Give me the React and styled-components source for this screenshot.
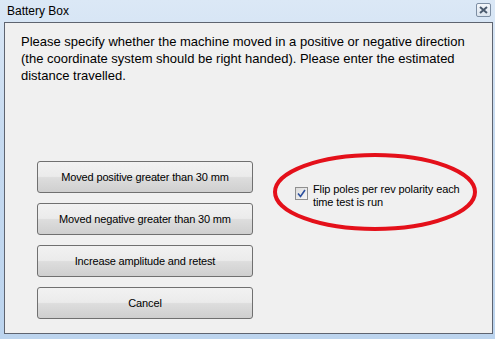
import React from "react";
import styled, { createGlobalStyle } from "styled-components";

const Global = createGlobalStyle`
  html, body {
    margin: 0;
    padding: 0;
    background: #c9dcf0;
  }
  * { box-sizing: border-box; }
`;

export default function App() {
    const buttons = [
        "Moved positive greater than 30 mm",
        "Moved negative greater than 30 mm",
        "Increase amplitude and retest",
        "Cancel",
    ];
    return (
        <>
            <Global />
            <Window>
                <TitleBar>
                    <Title>Battery Box</Title>
                    <CloseBox>
                        <svg width="9" height="8" viewBox="0 0 9 8">
                            <path d="M1 1 L8 7 M8 1 L1 7" stroke="#4a5a6e" strokeWidth="2" />
                        </svg>
                    </CloseBox>
                </TitleBar>
                <Panel>
                    <Message>
                        Please specify whether the machine moved in a positive or negative direction
                        (the coordinate system should be right handed). Please enter the estimated
                        distance travelled.
                    </Message>
                    <Controls>
                        <ButtonColumn>
                            {buttons.map((b) => (
                                <Button key={b}>{b}</Button>
                            ))}
                        </ButtonColumn>
                        <OptionArea>
                            <CheckRow>
                                <CheckBox>
                                    <svg width="9" height="9" viewBox="0 0 9 9">
                                        <path d="M1 4.5 L3.5 7.5 L8 1" fill="none" stroke="#2b4f9e" strokeWidth="1.6" />
                                    </svg>
                                </CheckBox>
                                <CheckLabel>Flip poles per rev polarity each time test is run</CheckLabel>
                            </CheckRow>
                            <Circle width="210" height="86" viewBox="0 0 210 86">
                                <ellipse cx="104" cy="42" rx="100" ry="37" fill="none" stroke="#e4101a" strokeWidth="4" />
                            </Circle>
                        </OptionArea>
                    </Controls>
                </Panel>
            </Window>
        </>
    );
}

const Window = styled.div`
    width: 495px;
    height: 339px;
    display: flex;
    flex-direction: column;
    background: linear-gradient(180deg, #dbe8f6 0%, #c6daf0 40%, #bcd4ee 100%);
    font-family: "Liberation Sans", Arial, sans-serif;
    color: #000;
`;

const TitleBar = styled.div`
    height: 21px;
    display: flex;
    align-items: center;
    justify-content: space-between;
    padding: 0 4px 0 7px;
`;

const Title = styled.span`
    font-size: 12px;
    color: #000;
    margin-top: 1px;
`;

const CloseBox = styled.div`
    width: 15px;
    height: 14px;
    margin-top: -1px;
    border: 1px solid #7d8ea3;
    border-radius: 2px;
    background: linear-gradient(180deg, #f4f7fb 0%, #dbe4ee 100%);
    display: flex;
    align-items: center;
    justify-content: center;
`;

const Panel = styled.div`
    flex: 1;
    margin: 1px 2px 5px 4px;
    background: #f0f0f0;
    border: 1px solid #5e6470;
    display: flex;
    flex-direction: column;
    justify-content: space-between;
    padding: 10px 0 14px 0;
`;

const Message = styled.p`
    margin: 0 8px 0 16px;
    font-size: 13px;
    line-height: 17px;
`;

const Controls = styled.div`
    display: flex;
    padding-left: 32px;
`;

const ButtonColumn = styled.div`
    width: 216px;
    display: flex;
    flex-direction: column;
    gap: 10px;
`;

const Button = styled.button`
    height: 32px;
    border: 1px solid #707070;
    border-radius: 3px;
    background: linear-gradient(180deg, #f2f2f2 0%, #ebebeb 48%, #dddddd 52%, #cfcfcf 100%);
    font-family: "Liberation Sans", Arial, sans-serif;
    font-size: 11px;
    letter-spacing: -0.15px;
    color: #000;
    padding: 0;
`;

const OptionArea = styled.div`
    position: relative;
    flex: 1;
    padding: 22px 0 0 42px;
`;

const CheckRow = styled.div`
    display: flex;
    align-items: flex-start;
    gap: 5px;
`;

const CheckBox = styled.div`
    width: 13px;
    height: 13px;
    margin-top: 4px;
    border: 1px solid #8f8f8f;
    background: linear-gradient(135deg, #dcdcdc 0%, #f7f7f7 100%);
    display: flex;
    align-items: center;
    justify-content: center;
    flex-shrink: 0;
`;

const CheckLabel = styled.span`
    width: 150px;
    font-size: 11px;
    line-height: 13px;
    letter-spacing: -0.1px;
`;

const Circle = styled.svg`
    position: absolute;
    left: 18px;
    top: -11px;
    pointer-events: none;
`;
